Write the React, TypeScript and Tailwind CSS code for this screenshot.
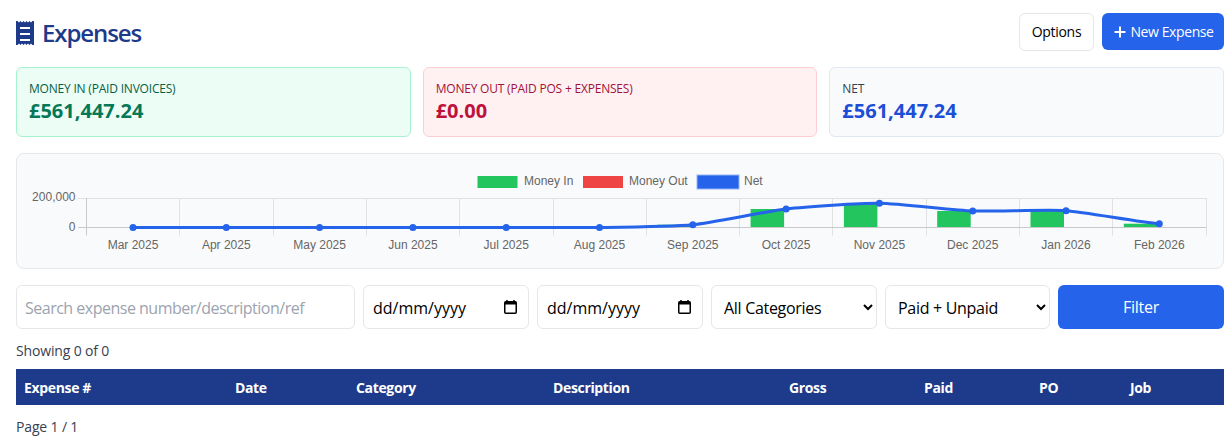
import React from 'react';
import { Plus } from 'lucide-react';

const sans = 'font-["Open_Sans","Noto_Sans",sans-serif]';

const months = ['Mar 2025', 'Apr 2025', 'May 2025', 'Jun 2025', 'Jul 2025', 'Aug 2025', 'Sep 2025', 'Oct 2025', 'Nov 2025', 'Dec 2025', 'Jan 2026', 'Feb 2026'];
const netY = [227.5, 227.5, 227.5, 227.5, 227.5, 227.5, 224.7, 209, 203.3, 211, 210.7, 223.7];
const barTop = [0, 0, 0, 0, 0, 0, 224.7, 209, 203.3, 211, 211, 223.7];
const step = 93.3;
const pointX = (i: number) => 133 + i * step;

// same idea as chart.js spline smoothing
const linePath = () => {
  const t = 0.2;
  let d = `M${pointX(0)} ${netY[0]}`;
  for (let i = 0; i < netY.length - 1; i++) {
    const y0 = netY[Math.max(i - 1, 0)];
    const y1 = netY[i];
    const y2 = netY[i + 1];
    const y3 = netY[Math.min(i + 2, netY.length - 1)];
    const c1 = y1 + ((y2 - y0) * t) / 2;
    const c2 = y2 - ((y3 - y1) * t) / 2;
    d += ` C${pointX(i) + step * t} ${c1} ${pointX(i + 1) - step * t} ${c2} ${pointX(i + 1)} ${y2}`;
  }
  return d;
};

const Chart = () => (
  <svg width="1206" height="114" viewBox="17 154 1206 114" className="block">
    <g fontFamily="Liberation Sans, Arial, sans-serif" fontSize="12" fill="#666666">
      <rect x="477.5" y="176" width="40" height="12" fill="#22c55e" />
      <text x="524" y="185">Money In</text>
      <rect x="583" y="176" width="40" height="12" fill="#ef4444" />
      <text x="629" y="185">Money Out</text>
      <rect x="697" y="175" width="42" height="14" fill="#2563eb" stroke="#93b4f5" strokeWidth="1" />
      <text x="744" y="185">Net</text>
      <text x="75.500" y="201" textAnchor="end">200,000</text>
      <text x="75.500" y="231" textAnchor="end">0</text>
      {months.map((m, i) => (
        <text key={m} x={pointX(i)} y="249" textAnchor="middle">{m}</text>
      ))}
    </g>
    <path d="M78 198.500H1206.500" stroke="#e1e1e4" />
    {months.map((m, i) => (
      <path key={m} d={`M${Math.round(86 + (i + 1) * step) + 0.5} 198V235.500`} stroke="#e1e1e4" />
    ))}
    <path d="M86.500 198V235.500" stroke="#c9c9cc" />
    <path d="M78 227.500H1206.500" stroke="#c9c9cc" />
    {barTop.map((top, i) =>
      top > 0 ? <rect key={i} x={pointX(i) - 35.5} y={top} width="33.5" height={227 - top} fill="#22c55e" /> : null
    )}
    <path d={linePath()} fill="none" stroke="#2563eb" strokeWidth="3" />
    {netY.map((y, i) => (
      <circle key={i} cx={pointX(i)} cy={y} r="3.5" fill="#2563eb" />
    ))}
  </svg>
);

const StatCard = ({ label, value, box, labelColor, valueColor }: { label: string; value: string; box: string; labelColor: string; valueColor: string }) => (
  <div className={`border rounded-md h-[70px] px-3 pt-[13px] ${box}`}>
    <div className={`text-[12px] leading-[16px] uppercase tracking-[-0.2px] ${labelColor}`}>{label}</div>
    <div className={`text-[20px] leading-[28px] font-bold ${valueColor}`}>{value}</div>
  </div>
);

const inputClass = 'h-[44px] w-full bg-white border border-[#e5e7eb] rounded-md px-2 pt-px text-[16px] text-black outline-none';

const DateField = () => (
  <div className="relative">
    <input className={`${inputClass} pl-[9px] placeholder:text-black`} placeholder="dd/mm/yyyy" />
    <svg width="13" height="14" viewBox="0 0 13 14" fill="none" className="absolute right-[12px] top-[15px] pointer-events-none">
      <path d="M3 0v2M10 0v2" stroke="#000" strokeWidth="1.5" />
      <rect x="0.750" y="1.750" width="11.500" height="11.500" rx="1" stroke="#000" strokeWidth="1.500" />
      <path d="M1 2h11v2.500H1z" fill="#000" />
    </svg>
  </div>
);

const App = () => {
  return (
    <div className={`${sans} bg-white h-[445px] pl-4 pr-2 pt-[13px] w-[1232px] overflow-hidden`}>
      <div className="flex items-center justify-between h-[37px]">
        <h1 className="flex items-center gap-2 text-[24px] leading-[32px] font-semibold tracking-[-1.1px] text-[#1e3a8a]">
          <svg width="18" height="24" viewBox="0 0 18 24" fill="#1e3a8a" className="mt-[3px]">
            <path d="M0 0h1.500l1.500 1.500L4.500 0 6 1.500 7.500 0 9 1.500 10.500 0 12 1.500 13.500 0 15 1.500 16.500 0H18v24h-1.500L15 22.500 13.500 24 12 22.500 10.500 24 9 22.500 7.500 24 6 22.500 4.500 24 3 22.500 1.500 24H0z" />
            <path d="M4 6h10v2H4zM4 12h10v2H4zM4 18h10v2H4z" fill="#fff" />
          </svg>
          <span className="mt-[2px]">Expenses</span>
        </h1>
        <div className="flex items-center gap-2">
          <button className="h-[38px] w-[75px] border border-[#e5e7eb] rounded-md bg-white text-[14px] tracking-[-0.3px] text-black">Options</button>
          <button className="h-[37px] w-[122px] rounded-md bg-[#2563eb] text-[14px] tracking-[-0.4px] text-white flex items-center justify-center gap-[2px]">
            <Plus size={16} strokeWidth={3} />
            New Expense
          </button>
        </div>
      </div>

      <div className="grid grid-cols-3 gap-3 mt-[17px]">
        <StatCard label="Money In (Paid Invoices)" value="£561,447.24" box="bg-[#ecfdf5] border-[#a7f3d0]" labelColor="text-[#065f46]" valueColor="text-[#047857]" />
        <StatCard label="Money Out (Paid POs + Expenses)" value="£0.00" box="bg-[#fff1f2] border-[#fecdd3]" labelColor="text-[#9f1239]" valueColor="text-[#be123c]" />
        <StatCard label="Net" value="£561,447.24" box="bg-[#f8fafc] border-[#e2e8f0]" labelColor="text-[#334155]" valueColor="text-[#1d4ed8]" />
      </div>

      <div className="mt-4 h-[116px] border border-[#e5e7eb] rounded-lg bg-[#f9fafb]">
        <Chart />
      </div>

      <div className="grid grid-cols-[339px_166px_166px_166px_165px_166px] gap-2 mt-4">
        <input className={`${inputClass} tracking-[-0.5px] placeholder:text-[#9ca3af]`} placeholder="Search expense number/description/ref" />
        <DateField />
        <DateField />
        <select className={`${inputClass} tracking-[-0.3px]`} defaultValue="all">
          <option value="all">All Categories</option>
        </select>
        <select className={`${inputClass} tracking-[-0.3px]`} defaultValue="both">
          <option value="both">Paid + Unpaid</option>
        </select>
        <button className="h-[44px] rounded-md bg-[#2563eb] text-white text-[16px] tracking-[-0.3px]">Filter</button>
      </div>

      <div className="text-[14px] leading-[20px] tracking-[-0.15px] text-[#374151] mt-3">Showing 0 of 0</div>

      <table className="w-full table-fixed border-collapse mt-2">
        <colgroup>
          <col className="w-[211px]" />
          <col className="w-[121px]" />
          <col className="w-[197px]" />
          <col className="w-[236px]" />
          <col className="w-[135px]" />
          <col className="w-[115px]" />
          <col className="w-[91px]" />
          <col className="w-[102px]" />
        </colgroup>
        <thead>
          <tr className="bg-[#1e3a8a] text-white h-[36px] text-[14px] tracking-[-0.35px] font-bold text-left">
            <th className="px-2">Expense #</th>
            <th className="px-2">Date</th>
            <th className="px-2">Category</th>
            <th className="px-2">Description</th>
            <th className="px-2">Gross</th>
            <th className="px-2">Paid</th>
            <th className="px-2">PO</th>
            <th className="px-2">Job</th>
          </tr>
        </thead>
      </table>

      <div className="text-[14px] leading-[20px] tracking-[-0.15px] text-[#374151] mt-3">Page 1 / 1</div>
    </div>
  );
};

export default App;
